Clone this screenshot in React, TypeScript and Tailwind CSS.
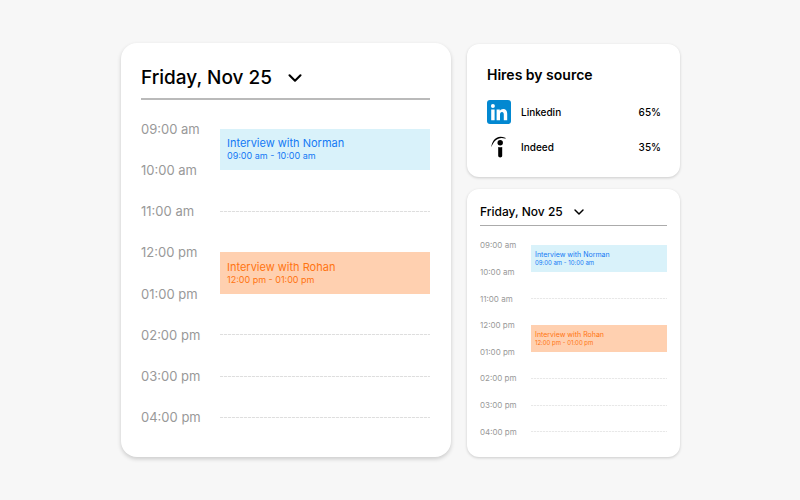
import { ChevronDown } from "lucide-react";
import clsx from "clsx";

type Size = "large" | "small";
type Tone = "blue" | "orange";

interface CalendarEvent {
  title: string;
  time: string;
  start: number;
  length: number;
  tone: Tone;
}

const HOURS = [
  "09:00 am",
  "10:00 am",
  "11:00 am",
  "12:00 pm",
  "01:00 pm",
  "02:00 pm",
  "03:00 pm",
  "04:00 pm",
];

const EVENTS: CalendarEvent[] = [
  { title: "Interview with Norman", time: "09:00 am - 10:00 am", start: 0, length: 1, tone: "blue" },
  { title: "Interview with Rohan", time: "12:00 pm - 01:00 pm", start: 3, length: 1, tone: "orange" },
];

const isBusy = (hour: number) =>
  EVENTS.some((e) => hour >= e.start && hour <= e.start + e.length);

function Schedule({ size }: { size: Size }) {
  const large = size === "large";
  return (
    <section
      className={clsx(
        "bg-white",
        large
          ? "rounded-2xl pt-[21px] pr-[21px] pb-[19px] pl-5 shadow-[0_2px_4px_rgba(0,0,0,0.18)]"
          : "rounded-xl px-[13px] pt-[13px] pb-3 shadow-[0_1px_3px_rgba(0,0,0,0.18)]",
      )}
    >
      <header
        className={clsx(large ? "border-b-2 border-[#bababa] pb-1.5" : "border-b border-[#ababab] pb-[3px]")}
      >
        <button
          type="button"
          className={clsx(
            "flex items-center font-medium text-black",
            large ? "gap-3 text-[19px] leading-7" : "gap-2 text-[12px] leading-5",
          )}
        >
          Friday, Nov 25
          <ChevronDown className={large ? "size-[22px]" : "size-4"} strokeWidth={large ? 2.3 : 2.2} aria-hidden="true" />
        </button>
      </header>

      {/* Two tracks per hour, so an event can begin on the hour mark */}
      <div
        className={clsx(
          "grid grid-rows-[repeat(16,minmax(0,1fr))]",
          large ? "mt-2 h-[330px] grid-cols-[79px_1fr]" : "mt-1.5 h-[213px] grid-cols-[51px_1fr]",
        )}
      >
        {HOURS.map((hour, i) => (
          <div
            key={hour}
            className={clsx(
              "col-start-1 flex items-center text-[#999999]",
              large ? "text-[13px] leading-5" : "text-[8px] leading-3",
            )}
            style={{ gridRow: `${i * 2 + 1} / span 2` }}
          >
            {hour}
          </div>
        ))}
        {HOURS.map((hour, i) =>
          isBusy(i) ? null : (
            <div
              key={hour}
              className="col-start-2 flex items-center"
              style={{ gridRow: `${i * 2 + 1} / span 2` }}
            >
              <div
                className={clsx(
                  "h-px w-full",
                  large
                    ? "bg-[repeating-linear-gradient(90deg,#dedede_0_3px,#fafafa_3px_4px)]"
                    : "bg-[repeating-linear-gradient(90deg,#e8e8e8_0_2px,#fafafa_2px_3px)]",
                )}
              />
            </div>
          ),
        )}
        {EVENTS.map((event) => (
          <article
            key={event.title}
            className={clsx(
              "col-start-2 flex flex-col justify-center",
              large ? "px-[7px]" : "px-1",
              event.tone === "blue" ? "bg-[#d9f2fa] text-[#1479f5]" : "bg-[#ffd0b0] text-[#ff7410]",
            )}
            style={{ gridRow: `${event.start * 2 + 2} / span ${event.length * 2}` }}
          >
            <h3 className={large ? "text-[11px] leading-[14px]" : "text-[7px] leading-[9px]"}>{event.title}</h3>
            <p className={large ? "text-[9px] leading-3" : "text-[6px] leading-2"}>{event.time}</p>
          </article>
        ))}
      </div>
    </section>
  );
}

function LinkedinLogo() {
  return (
    <svg viewBox="0 0 24 24" className="size-6" aria-hidden="true">
      <rect width="24" height="24" rx="3" fill="#0288d1" />
      <circle cx="5.9" cy="6.1" r="2" fill="#fff" />
      <path
        fill="#fff"
        d="M4.200 9.400h3.400v10.800H4.200zM9.600 9.400h3.200v1.500c.7-1.100 1.800-1.800 3.400-1.800 2.600 0 4 1.700 4 4.700v6.400h-3.400v-5.800c0-1.600-.5-2.500-1.800-2.500-1.400 0-2 1-2 2.500v5.800H9.600z"
      />
    </svg>
  );
}

function IndeedLogo() {
  return (
    <svg viewBox="0 0 24 24" className="size-6" aria-hidden="true">
      <path d="M4.300 12.300C4.700 5.600 9.800-1 18.200 2.700c.7.300.6 1.200-.2.900C11.700 1.500 6.900 5.300 4.300 12.300z" fill="#000" />
      <circle cx="13.200" cy="7.800" r="2.700" fill="#000" />
      <path d="M11.200 11.900c1.200.6 2.800.6 4 0v8.900c0 2.200-4 2.200-4 0z" fill="#000" />
    </svg>
  );
}

const SOURCES = [
  { name: "Linkedin", share: "65%", Logo: LinkedinLogo },
  { name: "Indeed", share: "35%", Logo: IndeedLogo },
];

function HiresBySource() {
  return (
    <section className="rounded-xl bg-white pt-5 pr-[19px] pb-[18px] pl-5 shadow-[0_1px_3px_rgba(0,0,0,0.18)]">
      <h2 className="text-[14px] leading-[22px] font-semibold text-black">Hires by source</h2>
      <ul className="mt-[14px] flex flex-col gap-[11px]">
        {SOURCES.map(({ name, share, Logo }) => (
          <li key={name} className="flex items-center gap-[10px] text-[10px] leading-4 font-medium text-black">
            <Logo />
            <span className="grow">{name}</span>
            <span>{share}</span>
          </li>
        ))}
      </ul>
    </section>
  );
}

export default function App() {
  return (
    <main className="flex min-h-screen items-center bg-[#f7f7f7] pr-[120px] pl-[121px] font-['Inter','Liberation_Sans',sans-serif]">
      <div className="grid w-full grid-cols-[330fr_213fr] items-end gap-4">
        <Schedule size="large" />
        <div className="flex flex-col gap-3">
          <HiresBySource />
          <Schedule size="small" />
        </div>
      </div>
    </main>
  );
}
